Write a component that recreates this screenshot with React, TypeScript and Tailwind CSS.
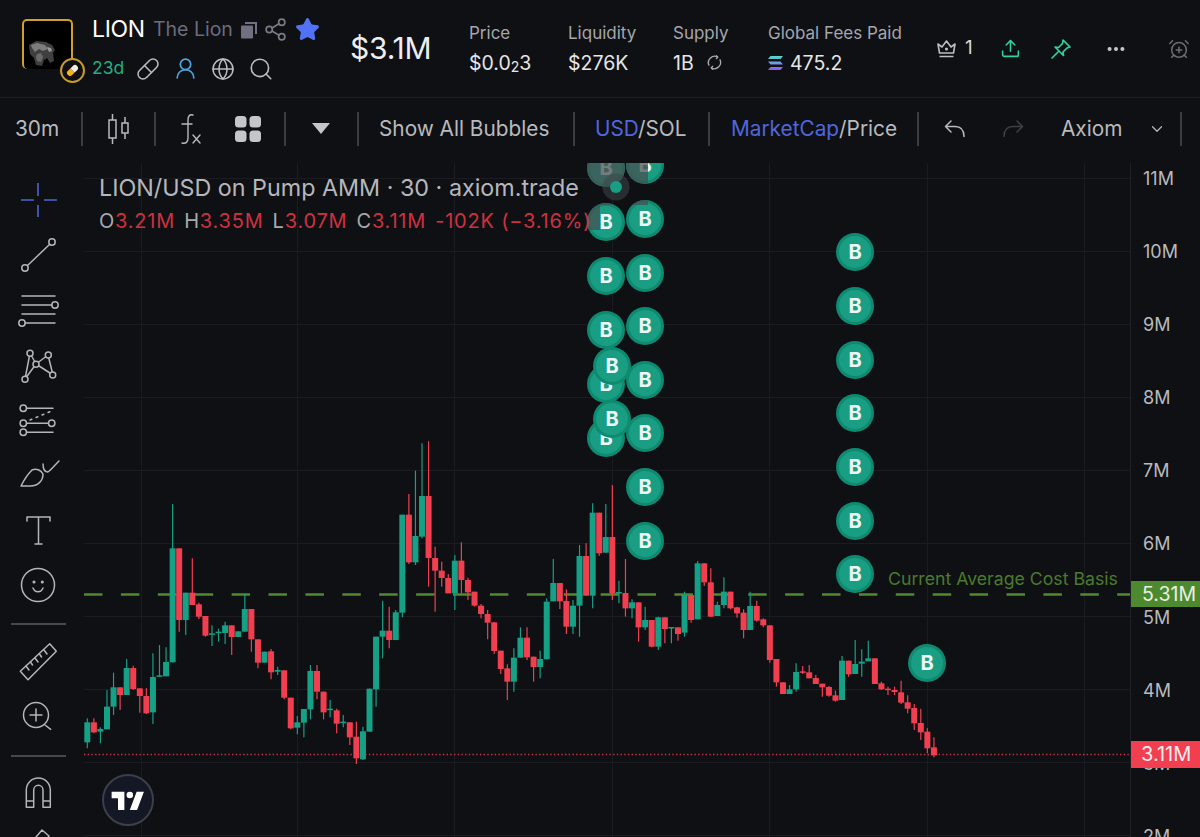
import React from 'react';
import { Share2, Star, Pill, Globe, Search, Upload, MoreHorizontal, AlarmClockPlus, ChevronDown, UserRound } from 'lucide-react';

type C = [string, number, number, number, number];
const A: C[] = [
['g',847,907,835,925],['r',847,877,835,880],['g',867,875,862,910],['g',800,868,750,868],['g',742,800,698,825],['r',742,765,742,810],['g',684,765,657,765],['r',684,747,677,750],['r',745,768,745,818],['r',768,820,745,822],['g',711,817,640,852],['g',706,709,615,709],['g',666,709,622,709],['g',325,667,192,667],['r',325,540,325,575],['g',458,540,458,585],['r',458,495,355,495],['r',493,530,488,537],['r',528,587,528,590],['g',580,584,556,618],['g',575,579,566,605],['g',556,579,545,612],['r',556,591,556,645],['g',574,591,574,591],['g',507,575,462,575],['r',507,598,507,635],['r',598,668,598,685],['g',635,668,635,668],['r',634,697,627,718],['g',690,695,680,705],['r',691,773,691,778],['r',773,865,773,868],['g',847,863,828,883],['g',807,848,807,892],['g',693,808,675,838],['r',693,755,675,778],['r',755,817,755,838],['g',806,810,780,832],['r',811,851,806,880],['g',845,849,825,862],['r',847,892,847,915],['r',890,955,845,972],['g',874,958,860,960],['g',746,875,746,875],['g',590,748,590,800],['g',572,590,482,655],['r',572,600,500,625],['g',517,600,510,600]];
const B: C[] = [
['g',254,548,254,562],['r',254,397,192,402],['g',318,397,122,405],['g',198,320,40,325],['r',198,384,34,470],['r',384,422,350,545],['r',422,444,395,470],['r',444,490,432,490],['g',392,490,375,540],['r',392,450,337,490],['r',450,487,443,510],['r',485,527,485,530],['r',527,552,522,565],['r',552,578,540,628],['r',577,663,577,672],['r',662,717,662,732],['r',715,755,703,810],['g',683,755,655,785],['g',623,683,592,683],['r',623,682,592,690],['r',680,711,680,755],['g',687,711,662,745],['g',515,688,505,688],['g',459,514,387,514],['r',459,514,459,537],['r',513,590,478,612],['g',527,590,510,612],['g',378,527,345,620],['r',378,497,340,497],['g',248,497,220,535],['r',248,370,248,378],['g',321,368,222,368],['r',321,490,165,510],['g',486,490,452,520],['r',489,535,387,560],['g',517,535,508,565],['r',517,592,517,635],['g',570,592,530,600],['r',570,650,570,652],['g',562,650,560,660],['r',562,597,562,640],['g',591,594,591,640],['r',592,612,592,632]];
const D: C[] = [
['g',135,248,125,260],['r',135,210,135,218],['g',40,208,33,208],['r',40,97,40,108],['r',97,200,55,200],['g',165,198,155,198],['g',125,165,82,175],['r',125,175,125,178],['r',172,190,170,203],['r',188,240,178,265],['g',168,240,125,240],['r',168,212,152,215],['r',208,226,205,232],['r',226,330,226,338],['r',327,397,327,410],['r',397,432,397,432],['g',418,432,405,432],['g',366,418,340,425],['r',364,367,348,372],['r',367,385,345,385],['r',384,402,375,402],['r',401,412,401,440],['r',411,437,408,440],['r',436,452,422,455],['g',332,450,318,450],['r',332,373,332,380],['g',342,372,270,372],['g',335,341,298,380],['g',325,334,272,334],['r',325,402,325,402],['r',400,418,395,420],['r',416,420,410,435],['r',420,426,410,435],['r',427,458,392,462],['r',457,476,436,490],['r',474,520,462,540],['r',519,547,476,570],['r',545,595,535,610],['r',592,616,562,622]];

const candles = [
  ...A.map(c => ({ c, off: 440 })),
  ...B.map(c => ({ c, off: 430 })),
  ...D.map(c => ({ c, off: 550 })),
];

const bubbles: [number, number][] = [
  [606,168],[645,165],[606,222],[645,219],[606,276],[645,273],[606,330],[645,326],[606,384],[645,380],[606,438],[645,433],[645,487],[645,541],
  [612,366],[612,419],
  [855,252],[855,306],[855,360],[855,413],[855,467],[855,521],[855,574],[927,663],
];

const axis: [string, number][] = [['11M',178],['10M',251],['9M',324],['8M',397],['7M',470],['6M',543],['5M',617],['4M',690],['3M',763],['2M',836]];
const gridY = [178,251,324,397,470,543,616,689,762,835];
const gridX = [141,297,454,612,769,927,1084];

const stroke = { fill: 'none', stroke: '#b4b5b9', strokeWidth: 1.5, strokeLinecap: 'round' as const, strokeLinejoin: 'round' as const };

function Tool({ h, children }: { h: string; children: React.ReactNode }) {
  return (
    <div className={`flex items-center justify-center w-[76px] shrink-0 ${h}`}>
      <svg width="44" height="44" viewBox="0 0 44 44" className="shrink-0 overflow-visible" {...stroke}>{children}</svg>
    </div>
  );
}

function Sep() {
  return <div className="w-[2px] h-[34px] bg-[#3c3d42] shrink-0" />;
}

function Sidebar() {
  return (
    <div className="w-[84px] shrink-0 flex flex-col pt-[9.5px] overflow-hidden">
      <div className="flex items-center justify-center w-[76px] h-[55px] shrink-0">
        <svg width="44" height="44" viewBox="0 0 44 44" fill="none" stroke="#4a66d8" strokeWidth="1.6">
          <path d="M5 22h13M28 22h13M22 5v13M22 27v12" />
        </svg>
      </div>
      <Tool h="h-[55px]">
        <path d="M11.5 32.5 33.5 11.5" /><circle cx="9" cy="35" r="3.2" /><circle cx="36" cy="9" r="3.2" />
      </Tool>
      <Tool h="h-[55px]">
        <path d="M6 8h33M6 17h30M6 26h33M9 35h30" /><circle cx="39" cy="17" r="3.2" /><circle cx="6" cy="35" r="3.2" />
      </Tool>
      <Tool h="h-[55px]">
        <path d="M14 10 9 36M14 10l6 11M20 21l12-9M32 12l5 20M20 21l17 11M20 21 9 36" />
        <circle cx="14" cy="10.3" r="3" fill="#0f1014" /><circle cx="32.3" cy="12" r="3" fill="#0f1014" /><circle cx="20" cy="21.3" r="3" fill="#0f1014" /><circle cx="9" cy="36.3" r="3" fill="#0f1014" /><circle cx="36.7" cy="32" r="3" fill="#0f1014" />
      </Tool>
      <Tool h="h-[55px]">
        <path d="M10.5 10.3H37M10.5 25.3h22M10.5 34.3H37" /><path d="M14 22 34 13.7" strokeDasharray="2 4.5" />
        <circle cx="7.3" cy="10.3" r="3.2" /><circle cx="7.3" cy="25.3" r="3.2" /><circle cx="35.7" cy="25.3" r="3.2" /><circle cx="7.3" cy="34.3" r="3.2" />
      </Tool>
      <Tool h="h-[55px]">
        <path d="M5 33C8 27 12 21 16 17 20 15 25 17 27 21 27 28 22 33 14 33Z" /><path d="M27 11c0 5 2 8 5 8 3-2 7-7 11-11" />
      </Tool>
      <Tool h="h-[55px]">
        <path d="M11 13V9h23v4M22.5 9v27M19 36h7" />
      </Tool>
      <Tool h="h-[55px]">
        <circle cx="22" cy="22" r="16.5" /><circle cx="18" cy="19" r="0.8" /><circle cx="26.3" cy="19" r="0.8" /><path d="M17 25c2 5 8 5 10 0" />
      </Tool>
      <div className="h-[2px] w-[55px] ml-[11px] my-[10.5px] bg-[#47484c] shrink-0" />
      <Tool h="h-[53px]">
        <path d="M4.3 31.3 33.7 3.7l6.6 7.6L12 39.7Z" /><path d="M10 26l3 4M14.5 22l2 3M19 18l3 4M23.5 14l2 3M28 10l3 4" />
      </Tool>
      <Tool h="h-[53px]">
        <circle cx="20" cy="22" r="12.5" /><path d="M20 16v12M14 22h12M29 32l5.7 4.3" />
      </Tool>
      <div className="h-[2px] w-[55px] ml-[11px] mt-[13px] mb-[10px] bg-[#47484c] shrink-0" />
      <Tool h="h-[53px]">
        <path d="M10.3 36.3V19a12 12 0 0 1 24 0v17.3h-7.3V19a4.6 4.6 0 0 0-9.3 0v17.3ZM10.3 30h7.4M27 30h7.3" />
      </Tool>
      <Tool h="h-[30px]">
        <path d="M15 30 26 17l7 6-11 13Z" />
      </Tool>
    </div>
  );
}

function Chart() {
  return (
    <div className="relative flex-1 overflow-hidden">
      <svg className="absolute inset-0" width="1046" height="674" viewBox="84 163 1046 674">
        <defs>
          <clipPath id="legendbg">
            <rect x="84" y="163" width="564" height="42" />
            <rect x="84" y="205" width="516" height="25" />
          </clipPath>
        </defs>
        {gridY.map(y => <line key={y} x1="84" x2="1130" y1={y + 0.5} y2={y + 0.5} stroke="#1b1c21" strokeWidth="1" />)}
        {gridX.map(x => <line key={x} x1={x + 0.5} x2={x + 0.5} y1="163" y2="837" stroke="#1b1c21" strokeWidth="1" />)}
        <line x1="84" x2="1130" y1="594.5" y2="594.5" stroke="#4f8a2e" strokeWidth="2.4" strokeDasharray="18.5 18.4" />
        <line x1="84" x2="1130" y1="754.5" y2="754.5" stroke="#c93445" strokeWidth="1.3" strokeDasharray="1.4 2.3" />
        {candles.map(({ c, off }, i) => {
          const x = 87.3 + i * 6.563;
          const col = c[0] === 'g' ? '#16a085' : '#f23f50';
          const y1 = off + c[1] / 3;
          const y2 = off + c[2] / 3;
          return (
            <g key={i}>
              <line x1={x} x2={x} y1={off + c[3] / 3} y2={off + c[4] / 3} stroke={col} strokeWidth="1.2" />
              <rect x={x - 3} y={y1} width="6" height={Math.max(y2 - y1, 1.5)} fill={col} />
            </g>
          );
        })}
        {bubbles.map(([x, y], i) => (
          <g key={i}>
            <circle cx={x} cy={y} r="19" fill="#0e8a70" />
            <circle cx={x} cy={y} r="16" fill="#1a9e83" />
            <text x={x} y={y + 7} textAnchor="middle" fontSize="20" fontWeight="700" fill="#eef7f4" fontFamily="Inter, sans-serif">B</text>
          </g>
        ))}
        <g clipPath="url(#legendbg)">
          {bubbles.filter(([, y]) => y < 240).map(([x, y], i) => (
            <circle key={i} cx={x} cy={y} r="19" fill="#4a4e50" fillOpacity="0.72" />
          ))}
        </g>
        <circle cx="616" cy="187" r="13.5" fill="#3e4548" fillOpacity="0.55" />
        <circle cx="616" cy="187" r="6" fill="#1a9e83" />
        <text x="888" y="585" fontSize="17.7" fill="#4a7a2c" fontFamily="Inter, sans-serif">Current Average Cost Basis</text>
      </svg>
      <div className="absolute left-[15px] top-[11px] leading-none">
        <div className="text-[23.3px] leading-[28px] text-[#b6b7bb] whitespace-nowrap">LION/USD on Pump AMM · 30 · axiom.trade</div>
        <div className="text-[20px] tracking-[0.8px] leading-[24px] mt-[7px] whitespace-nowrap text-[#cf3040]">
          <span className="text-[#a8a9ad]">O</span>3.21M
          <span className="text-[#a8a9ad] ml-[9px]">H</span>3.35M
          <span className="text-[#a8a9ad] ml-[9px]">L</span>3.07M
          <span className="text-[#a8a9ad] ml-[9px]">C</span>3.11M
          <span className="ml-[9px]">-102K (−3.16%)</span>
        </div>
      </div>
      <div className="absolute left-[18px] top-[611px] w-[52px] h-[52px] rounded-full bg-[#141824] border-2 border-[#3a3f4c] flex items-center justify-center">
        <svg width="34" height="20" viewBox="0 0 36 22" fill="#ffffff">
          <path d="M14 22H7V9H0V2h14v20zM28 22h-8l7.5-20h8L28 22z" />
          <circle cx="20" cy="5.5" r="3.6" />
        </svg>
      </div>
    </div>
  );
}

function PriceAxis() {
  return (
    <div className="relative w-[70px] shrink-0 border-l border-[#1f2025] overflow-hidden text-[18px] text-[#b9babd]">
      {axis.map(([t, y]) => (
        <div key={t} className="absolute left-[12px] leading-[22px]" style={{ top: y - 163 - 10 }}>{t}</div>
      ))}
      <div className="absolute left-0 right-0 top-[418px] h-[26px] bg-[#4d8a2f] text-[19.5px] text-[#e9efe4] pl-[11px] leading-[26px]">5.31M</div>
      <div className="absolute left-0 right-0 top-[578px] h-[27px] bg-[#f23f50] text-[20px] text-[#fdeef0] pl-[10px] leading-[27px]">3.11M</div>
    </div>
  );
}

function Stat({ w, label, children }: { w: string; label: string; children: React.ReactNode }) {
  return (
    <div className={`${w} shrink-0 flex flex-col`}>
      <div className="text-[17px] leading-[20px] text-[#a5a6ac] whitespace-nowrap">{label}</div>
      <div className="text-[19.5px] h-[24px] leading-[24px] mt-[8px] text-[#e6e6e8] flex items-center whitespace-nowrap">{children}</div>
    </div>
  );
}

function Header() {
  return (
    <div className="h-[98px] shrink-0 flex items-center border-b border-[#1d1e23]">
      <div className="relative ml-[22px] w-[51px] h-[50px] mb-[10px] rounded-[5px] border-2 border-[#cfa12a] border-b-0 bg-black shrink-0">
        <svg className="absolute left-[3px] top-[18px]" width="30" height="28" viewBox="0 0 30 28">
          <path d="M2 6 9 2l10 1 6 3 3 5-2 3 1 8-4 2-3-5-3 2-2 6-6-1-2-7-4-4Z" fill="#3f3f3f" />
          <path d="M4 6l6-2 8 2 3 4-5 2-4-2-4 3-3-4Z" fill="#7c7c7c" />
          <path d="M10 15l4-1 2 4-2 5-4-1-1-4Z" fill="#6a6a6a" />
          <path d="M20 8l4 1 1 3-3 1Z" fill="#9a9a9a" />
        </svg>
        <div className="absolute left-[36px] top-[37px] w-[25px] h-[25px] rounded-full border-2 border-[#c99c28] bg-[#0f1014] flex items-center justify-center">
          <svg width="15" height="15" viewBox="0 0 15 15">
            <g transform="rotate(-45 7.5 7.5)">
              <path d="M7.500 4.500H4a3 3 0 0 0 0 6h3.500Z" fill="#f5b21e" />
              <path d="M7.500 4.500H11a3 3 0 0 1 0 6H7.500Z" fill="#f5efe0" />
            </g>
          </svg>
        </div>
      </div>
      <div className="ml-[19px] w-[258px] shrink-0 flex flex-col">
        <div className="flex items-center h-[26px]">
          <span className="text-[23px] text-white tracking-[-0.3px]">LION</span>
          <span className="text-[19.5px] text-[#6b6c7c] ml-[8px]">The Lion</span>
          <svg className="ml-[7px] shrink-0" width="18" height="18" viewBox="0 0 18 18" fill="#6f7080">
            <path d="M5 1h12v12h-2V3H5Z" /><rect x="1" y="4.5" width="12" height="13" rx="1" />
          </svg>
          <Share2 className="ml-[5px] shrink-0" size={25} stroke="#7a7b84" strokeWidth={1.6} />
          <Star className="ml-[7px] shrink-0" size={25} fill="#5272f5" stroke="#5272f5" />
        </div>
        <div className="flex items-center mt-[14px] h-[24px]">
          <span className="text-[17.5px] w-[31px] text-[#1fae7e]">23d</span>
          <Pill className="ml-[13px] shrink-0" size={24} stroke="#bcbdc2" strokeWidth={1.5} />
          <UserRound className="ml-[13px] shrink-0" size={25} stroke="#4fa8e0" strokeWidth={1.6} />
          <Globe className="ml-[13px] shrink-0" size={24} stroke="#bcbdc2" strokeWidth={1.5} />
          <Search className="ml-[13px] shrink-0" size={26} stroke="#bcbdc2" strokeWidth={1.5} />
        </div>
      </div>
      <div className="text-[30px] text-[#eeeeef] w-[119px] shrink-0 tracking-[-0.2px]">$3.1M</div>
      <Stat w="w-[99px]" label="Price"><span>$0.0</span><span className="text-[14px] mt-[8px]">2</span><span>3</span></Stat>
      <Stat w="w-[105px]" label="Liquidity">$276K</Stat>
      <Stat w="w-[95px]" label="Supply">
        1B
        <svg className="ml-[12px]" width="17" height="17" viewBox="0 0 16 16" fill="none" stroke="#a8a9ad" strokeWidth="1.3">
          <path d="M3 11A6 6 0 0 1 11 2.8M13 5A6 6 0 0 1 5 13.2" /><path d="M9.5 1.5 11 3l-1.6 1.6M6.5 14.5 5 13l1.6-1.6" />
        </svg>
      </Stat>
      <Stat w="w-[168px]" label="Global Fees Paid">
        <svg className="mr-[7px]" width="15" height="16" viewBox="0 0 15 16">
          <defs>
            <linearGradient id="sol" x1="0" y1="0" x2="0" y2="1">
              <stop offset="0" stopColor="#58d8c8" /><stop offset="0.5" stopColor="#6f9be0" /><stop offset="1" stopColor="#9a52e8" />
            </linearGradient>
          </defs>
          <path d="M2.5 1H15l-2.5 3H0ZM0 6.5h12.5L15 9.5H2.5ZM2.5 12H15l-2.5 3H0Z" fill="url(#sol)" />
        </svg>
        475.2
      </Stat>
      <svg width="21" height="21" viewBox="0 0 21 21" fill="none" stroke="#bcbdc2" strokeWidth="1.6" strokeLinejoin="round" className="shrink-0">
        <path d="M2 6l4 3 4.500-6 4.500 6 4-3-1.500 9H3.500ZM3.500 18.500h14" /><circle cx="10.500" cy="11" r="0.8" />
      </svg>
      <span className="text-[19px] text-[#d8d8da] ml-[8px] w-[9px]">1</span>
      <Upload className="ml-[26px] shrink-0" size={21} stroke="#2fd19c" strokeWidth={1.8} />
      <svg className="ml-[29px] shrink-0" width="22" height="22" viewBox="0 0 22 22" fill="none" stroke="#2fd19c" strokeWidth="1.7" strokeLinejoin="round" strokeLinecap="round">
        <path d="M13 2 20 9l-3 1-4 4 .5 3.500L5 9l3.500.5 4-4ZM8.500 13.500 2 20" />
      </svg>
      <MoreHorizontal className="ml-[33px] shrink-0" size={22} stroke="#c9cace" strokeWidth={2.4} />
      <AlarmClockPlus className="ml-[41px] shrink-0" size={22} stroke="#6c6d74" strokeWidth={1.7} />
    </div>
  );
}

function Toolbar() {
  return (
    <div className="h-[65px] pb-[4px] shrink-0 flex items-center text-[20.8px] text-[#b9babe] whitespace-nowrap">
      <span className="ml-[15px] w-[44px]">30m</span>
      <div className="ml-[22px]"><Sep /></div>
      <svg className="ml-[25px] shrink-0" width="22" height="36" viewBox="0 0 22 36" fill="none" stroke="#b9babe" strokeWidth="1.5">
        <rect x="1" y="9" width="7" height="18" /><path d="M4.500 3v6M4.500 27v6" />
        <rect x="14" y="12" width="6" height="10" /><path d="M17 6v6M17 22v6" />
      </svg>
      <div className="ml-[24px]"><Sep /></div>
      <svg className="ml-[24px] shrink-0" width="22" height="34" viewBox="0 0 22 34" fill="none" stroke="#b9babe" strokeWidth="1.4" strokeLinecap="round">
        <path d="M13 3C9 2 8 5 8 8v18c0 4-2 6-6 5" /><path d="M2 12h10M13 23l7 8M20 23l-7 8" />
      </svg>
      <svg className="ml-[33px] shrink-0" width="26" height="26" viewBox="0 0 26 26" fill="#c5c6ca">
        <rect x="0" y="0" width="11.500" height="11.500" rx="3.500" /><rect x="14.500" y="0" width="11.500" height="11.500" rx="3.500" />
        <rect x="0" y="14.500" width="11.500" height="11.500" rx="3.500" /><rect x="14.500" y="14.500" width="11.500" height="11.500" rx="3.500" />
      </svg>
      <div className="ml-[23px]"><Sep /></div>
      <svg className="ml-[26px] shrink-0" width="18" height="11" viewBox="0 0 18 11" fill="#c5c6ca"><path d="M0 0h18L9 11Z" /></svg>
      <div className="ml-[27px]"><Sep /></div>
      <span className="ml-[20px] w-[172px]">Show All Bubbles</span>
      <div className="ml-[22px]"><Sep /></div>
      <span className="ml-[20px] w-[92px]"><span className="text-[#4f66dc]">USD</span>/SOL</span>
      <div className="ml-[21px]"><Sep /></div>
      <span className="ml-[21px] w-[165px]"><span className="text-[#4f66dc]">MarketCap</span>/Price</span>
      <div className="ml-[21px]"><Sep /></div>
      <svg className="ml-[25px] shrink-0" width="22" height="20" viewBox="0 0 22 20" fill="none" stroke="#b9babe" strokeWidth="1.5" strokeLinecap="round" strokeLinejoin="round">
        <path d="M7 2 1.500 7.500 7 13M2 7.500h9c5 0 9 3 9 10" />
      </svg>
      <svg className="ml-[36px] shrink-0" width="22" height="20" viewBox="0 0 22 20" fill="none" stroke="#3f4045" strokeWidth="1.5" strokeLinecap="round" strokeLinejoin="round">
        <path d="M15 2l5.500 5.500L15 13M20 7.500h-9c-5 0-9 3-9 10" />
      </svg>
      <span className="ml-[37px] w-[60px]">Axiom</span>
      <ChevronDown className="ml-[27px] shrink-0" size={18} stroke="#b9babe" strokeWidth={1.6} />
      <div className="ml-[14px]"><Sep /></div>
    </div>
  );
}

export default function App() {
  return (
    <div className="w-[1200px] h-[837px] overflow-hidden flex flex-col bg-[#0f1014] font-[Inter,sans-serif]">
      <Header />
      <Toolbar />
      <div className="flex-1 flex min-h-0">
        <Sidebar />
        <Chart />
        <PriceAxis />
      </div>
    </div>
  );
}
